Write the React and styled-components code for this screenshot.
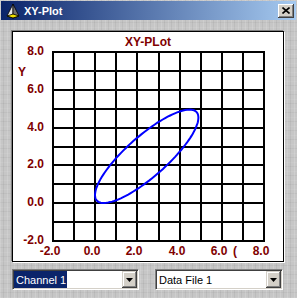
import React from "react";
import styled, { createGlobalStyle } from "styled-components";

const GlobalStyle = createGlobalStyle`
  html, body {
    margin: 0;
    padding: 0;
  }
  body {
    font-family: "Liberation Sans", Arial, sans-serif;
    background: #d4d0c8;
  }
`;

const Window = styled.div`
  width: 297px;
  height: 298px;
  box-sizing: border-box;
  padding: 1px 1px 0 1px;
  display: flex;
  flex-direction: column;
  background-color: #c6c6c6;
  background-image: repeating-linear-gradient(
      90deg,
      rgba(255, 255, 255, 0.14) 0 1px,
      transparent 1px 3px,
      rgba(0, 0, 0, 0.05) 3px 4px,
      transparent 4px 7px
    ),
    repeating-linear-gradient(
      0deg,
      rgba(255, 255, 255, 0.08) 0 1px,
      transparent 1px 5px,
      rgba(0, 0, 0, 0.04) 5px 6px,
      transparent 6px 9px
    );
`;

const TitleBar = styled.div`
  height: 19px;
  display: flex;
  align-items: center;
  padding: 0 2px 0 4px;
  background: linear-gradient(to right, #0a246a, #a6caf0);
`;

const TitleText = styled.span`
  margin-left: 3px;
  color: #fff;
  font-weight: bold;
  font-size: 11px;
`;

const CloseButton = styled.div`
  margin-left: auto;
  width: 16px;
  height: 14px;
  box-sizing: border-box;
  display: flex;
  align-items: center;
  justify-content: center;
  background: #d4d0c8;
  box-shadow: inset -1px -1px 0 #404040, inset 1px 1px 0 #fff,
    inset -2px -2px 0 #808080, inset 2px 2px 0 #d4d0c8;
`;

const Body = styled.div`
  padding: 11px 0 0 11px;
`;

const Panel = styled.div`
  width: 272px;
  height: 231px;
  box-sizing: border-box;
  border: 1px solid #000;
  background: #fff;
  box-shadow: -1px -1px 0 #808080, 1px 1px 0 #fff;
  display: flex;
  flex-direction: column;
`;

const ChartTitle = styled.div`
  height: 18px;
  box-sizing: border-box;
  padding-top: 3px;
  line-height: 15px;
  text-align: center;
  font-size: 12px;
  font-weight: bold;
  color: #800000;
`;

const ChartSvg = styled.svg`
  display: block;
  overflow: visible;
`;

const Controls = styled.div`
  margin-top: 7px;
  display: flex;
  gap: 16px;
`;

const Select = styled.div`
  width: ${(p) => p.w}px;
  height: 21px;
  box-sizing: border-box;
  border: 1px solid;
  border-color: #808080 #fff #fff #808080;
  padding: 1px;
  background: #fff;
  box-shadow: inset 1px 1px 0 #404040, inset -1px -1px 0 #d4d0c8;
  display: flex;
`;

const SelectText = styled.div`
  flex: 1;
  display: flex;
  align-items: stretch;
  font-size: 11px;
  color: #000;
`;

const Value = styled.span`
  display: flex;
  align-items: center;
  padding: 0 1px 0 2px;
  background: ${(p) => (p.selected ? "#0a246a" : "transparent")};
  color: ${(p) => (p.selected ? "#fff" : "#000")};
`;

const ArrowButton = styled.div`
  width: 15px;
  height: 17px;
  box-sizing: border-box;
  display: flex;
  align-items: center;
  justify-content: center;
  background: #d4d0c8;
  box-shadow: inset -1px -1px 0 #404040, inset 1px 1px 0 #d4d0c8,
    inset -2px -2px 0 #808080, inset 2px 2px 0 #fff;
`;

const AppIcon = () => (
  <svg width="16" height="16" viewBox="0 0 16 16">
    <polygon points="8,1 2,13 8,15" fill="#e8e8e8" stroke="#000" strokeWidth="0.8" />
    <polygon points="8,1 14,13 8,15" fill="#707070" stroke="#000" strokeWidth="0.8" />
    <polygon points="2,13 8,11 14,13 8,15" fill="#f0e000" stroke="#000" strokeWidth="0.8" />
  </svg>
);

const CloseIcon = () => (
  <svg width="8" height="7" viewBox="0 0 8 7">
    <path d="M0.5 0.5 L7.5 6.5 M7.5 0.5 L0.5 6.5" stroke="#000" strokeWidth="1.6" />
  </svg>
);

const DownArrow = () => (
  <svg width="7" height="4" viewBox="0 0 7 4">
    <polygon points="0,0 7,0 3.5,4" fill="#000" />
  </svg>
);

// grid geometry (svg coords, origin at page 13,50)
const COLS = Array.from({ length: 11 }, (_, i) => 40 + Math.round(i * 21.1));
const ROWS = Array.from({ length: 11 }, (_, i) => 2 + Math.round(i * 18.9));

const toX = (v) => COLS[2] + v * 21.1;
const toY = (v) => ROWS[8] - v * 18.9;

const ellipsePath = () => {
  const phi = (34 * Math.PI) / 180;
  const pts = [];
  for (let i = 0; i <= 120; i++) {
    const t = (i / 120) * Math.PI * 2;
    const x = 2.45 + 2.45 * Math.sin(t);
    const y = 2.47 + 2.47 * Math.sin(t + phi);
    pts.push(`${toX(x).toFixed(1)},${toY(y).toFixed(1)}`);
  }
  return "M" + pts.join(" L") + " Z";
};

const labelStyle = {
  fontFamily: '"Liberation Sans", Arial, sans-serif',
  fontWeight: "bold",
  fontSize: 12,
  fill: "#800000",
};

const Chart = () => (
  <ChartSvg width="270" height="211" viewBox="0 0 270 211">
    {COLS.map((x) => (
      <line key={"c" + x} x1={x} y1={ROWS[0] - 1} x2={x} y2={ROWS[10] + 1} stroke="#000" strokeWidth="2" />
    ))}
    {ROWS.map((y) => (
      <line key={"r" + y} x1={COLS[0] - 1} y1={y} x2={COLS[10] + 1} y2={y} stroke="#000" strokeWidth="2" />
    ))}
    <path d={ellipsePath()} fill="none" stroke="#0000ff" strokeWidth="2" />
    {["8.0", "6.0", "4.0", "2.0", "0.0", "-2.0"].map((t, i) => (
      <text key={t} x="31" y={ROWS[i * 2] + 3} textAnchor="end" style={labelStyle}>
        {t}
      </text>
    ))}
    <text x="5" y="26" style={labelStyle}>
      Y
    </text>
    {["-2.0", "0.0", "2.0", "4.0", "6.0", "8.0"].map((t, i) => (
      <text key={"x" + t} x={COLS[i * 2] - 3} y="205" textAnchor="middle" style={labelStyle}>
        {t}
      </text>
    ))}
    <text x="220" y="205" style={labelStyle}>
      (
    </text>
  </ChartSvg>
);

export default function App() {
  return (
    <>
      <GlobalStyle />
      <Window>
        <TitleBar>
          <AppIcon />
          <TitleText>XY-Plot</TitleText>
          <CloseButton>
            <CloseIcon />
          </CloseButton>
        </TitleBar>
        <Body>
          <Panel>
            <ChartTitle>XY-PLot</ChartTitle>
            <Chart />
          </Panel>
          <Controls>
            <Select w={127}>
              <SelectText>
                <Value selected>Channel 1</Value>
              </SelectText>
              <ArrowButton>
                <DownArrow />
              </ArrowButton>
            </Select>
            <Select w={128}>
              <SelectText>
                <Value>Data File 1</Value>
              </SelectText>
              <ArrowButton>
                <DownArrow />
              </ArrowButton>
            </Select>
          </Controls>
        </Body>
      </Window>
    </>
  );
}
